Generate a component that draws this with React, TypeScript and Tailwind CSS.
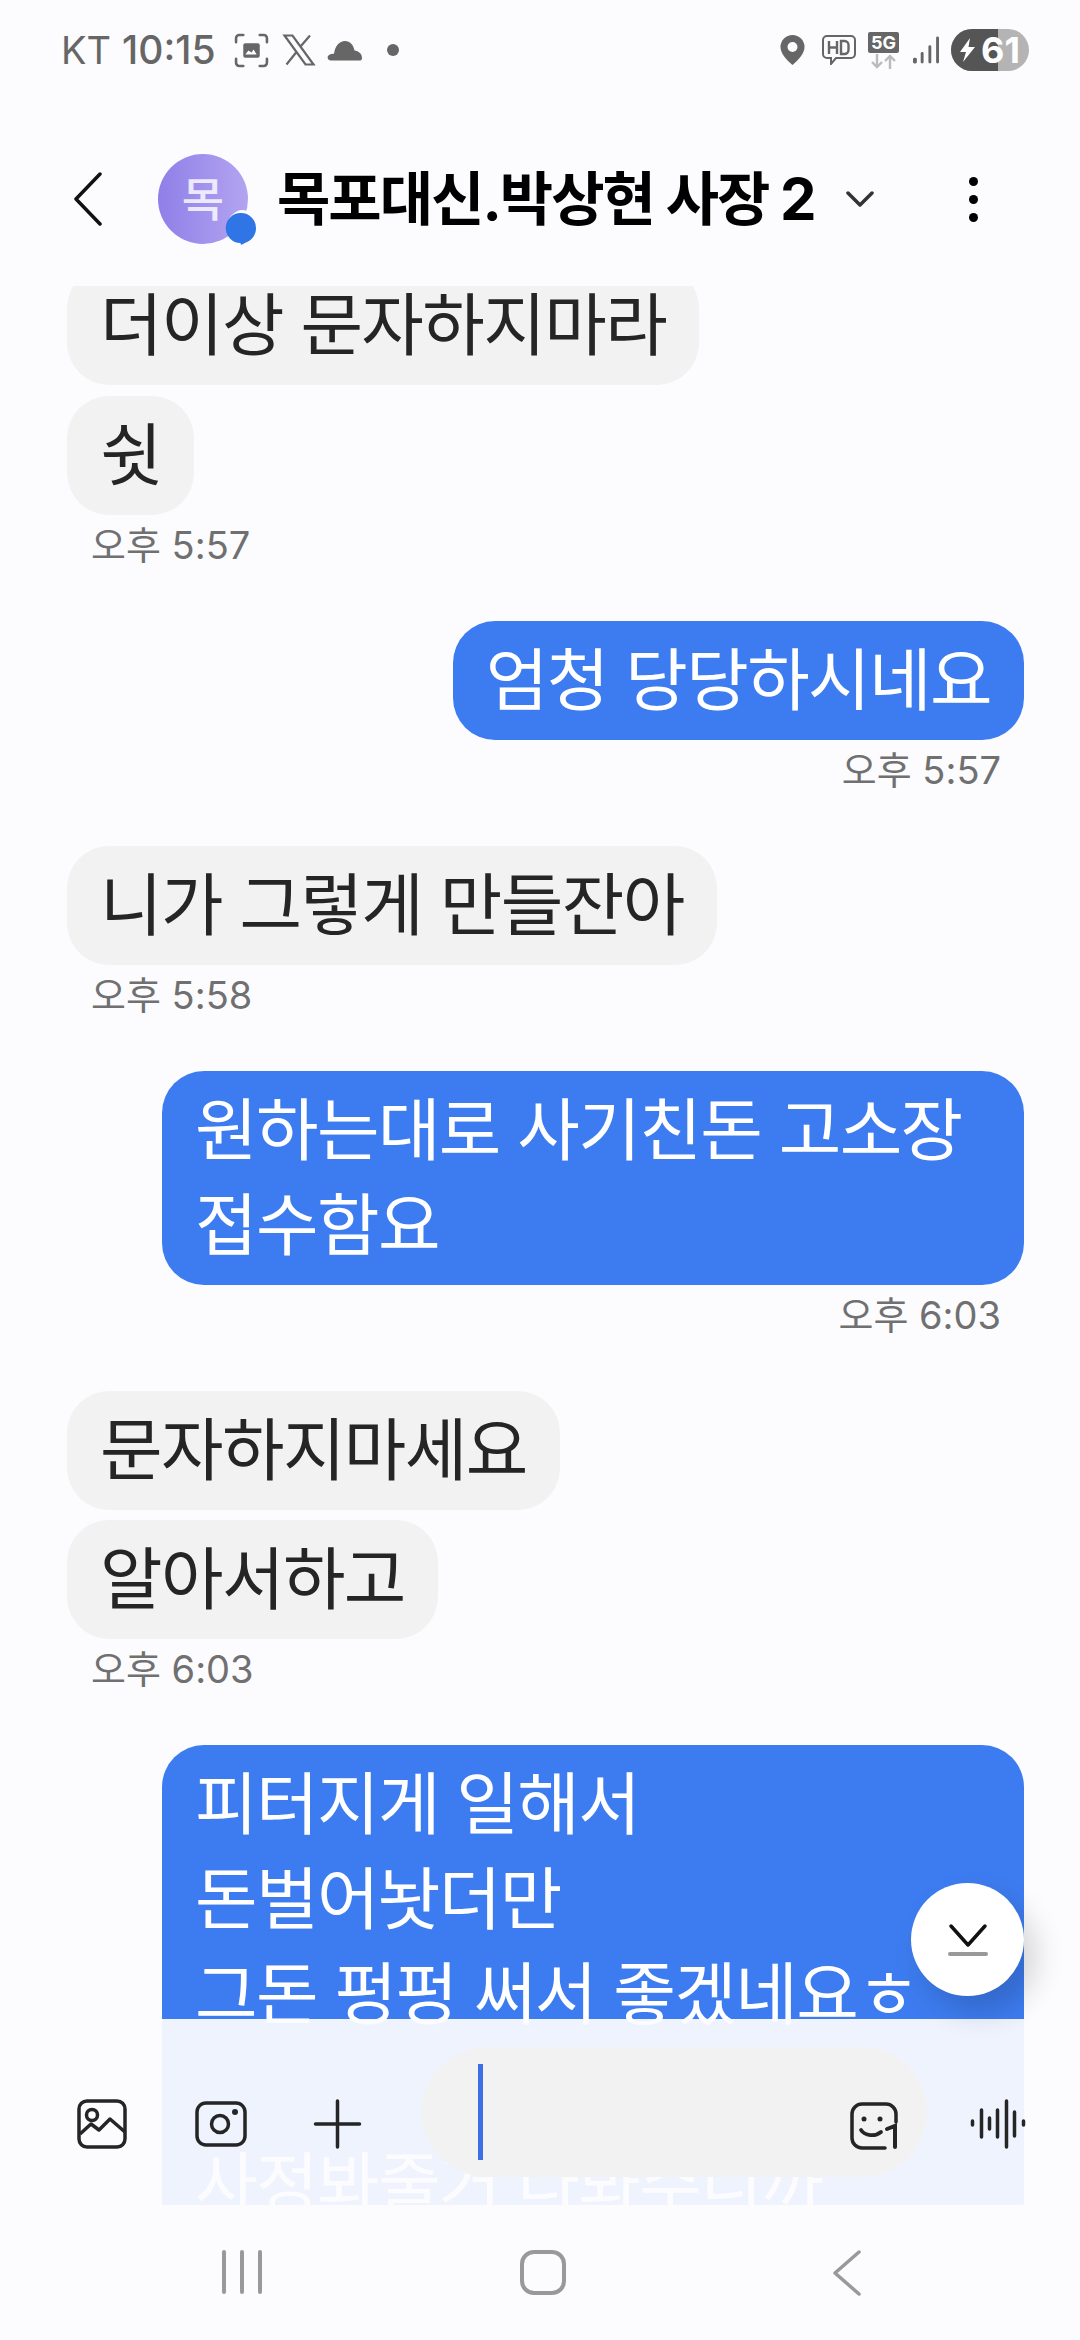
const font = "font-['Inter','Noto_Sans_CJK_KR',sans-serif]";

const Left = ({ text, className = "" }: { text: string; className?: string }) => (
  <div className={`self-start ml-[67px] rounded-[42px] bg-[#f2f2f3] px-[33px] py-[12px] text-[68px] leading-[95px] tracking-[-1.6px] text-[#252525] ${className}`}>
    {text}
  </div>
);

const Right = ({ text, className = "" }: { text: string; className?: string }) => (
  <div className={`self-end mr-[56px] max-w-[862px] rounded-[42px] bg-[#3d7cf0] px-[33px] py-[12px] text-[68px] leading-[95px] tracking-[-1.6px] text-white whitespace-pre-line ${className}`}>
    {text}
  </div>
);

const Time = ({ text, right }: { text: string; right?: boolean }) => (
  <div className={`h-[56px] text-[38px] leading-[60px] text-[#707070] ${right ? "self-end mr-[79px]" : "self-start ml-[91px]"}`}>
    {text}
  </div>
);

const StatusBar = () => (
  <div className="flex h-[100px] items-center justify-between pl-[61px] pr-[51px] text-[#666666]">
    <div className="flex items-center">
      <span className="text-[38px]">KT</span>
      <span className="ml-[11px] text-[39px] font-medium">10:15</span>
      <svg className="ml-[18px]" width="35" height="35" viewBox="0 0 34 34" fill="none" stroke="#666" strokeWidth="2.5" strokeLinecap="round">
        <path d="M2 9V5a3 3 0 0 1 3-3h4M25 2h4a3 3 0 0 1 3 3v4M32 25v4a3 3 0 0 1-3 3h-4M9 32H5a3 3 0 0 1-3-3v-4" />
        <rect x="9" y="10" width="16" height="14" rx="2" fill="#666" stroke="none" />
        <path d="M11 21l3-4 3 2 2-3 3 5z" fill="#fff" stroke="none" />
      </svg>
      <svg className="ml-[13px]" width="34" height="32" viewBox="0 0 32 32" fill="none" stroke="#666" strokeWidth="2.2">
        <path d="M1.500 1.500h8l21 29h-8zM27 1.500 17.500 12.500M13.500 18 3.500 30.500" />
      </svg>
      <svg className="ml-[11px]" width="36" height="21" viewBox="0 0 35 21" fill="#666">
        <path d="M3 20.500a3 3 0 0 1-1-5.800c1-.6 2.600-1 4.500-1C7.500 6 12 1 17.500 1c5 0 8.500 4 9.500 9.500 4 .5 7.500 3 7.500 7.500 0 2-1 2.500-2.500 2.500z" />
      </svg>
      <span className="ml-[24px] h-[12px] w-[12px] rounded-full bg-[#666666]" />
    </div>
    <div className="flex items-center">
      <svg width="25" height="30" viewBox="0 0 24 30">
        <path fillRule="evenodd" fill="#666" d="M12 0a12 12 0 0 1 12 12c0 6.500-6 13-12 18C6 25 0 18.500 0 12A12 12 0 0 1 12 0zm0 7a5 5 0 1 0 0 10 5 5 0 0 0 0-10z" />
      </svg>
      <svg className="ml-[17px]" width="34" height="30" viewBox="0 0 34 30" fill="none" stroke="#666" strokeWidth="2">
        <path d="M5 1h24a4 4 0 0 1 4 4v14a4 4 0 0 1-4 4H14l-5 6v-6H5a4 4 0 0 1-4-4V5a4 4 0 0 1 4-4z" />
        <path d="M7 6v13M15 6v13M7 12.500h8M19 6v13h3.500a4 4 0 0 0 4-4v-5a4 4 0 0 0-4-4z" strokeWidth="2.400" />
      </svg>
      <div className="ml-[12px] relative h-[37px] w-[31px]">
        <div className="h-[21px] rounded-[2px] bg-[#666666] text-center text-[18px] font-bold leading-[21px] text-white">5G</div>
        <svg className="absolute bottom-0 left-[3px]" width="25" height="15" viewBox="0 0 25 15" fill="none" stroke="#bbb" strokeWidth="2.400">
          <path d="M6 0v13M1 8l5 5 5-5M19 15V2M14 7l5-5 5 5" />
        </svg>
      </div>
      <svg className="ml-[14px]" width="26" height="29" viewBox="0 0 27 29" fill="#666">
        <rect x="0" y="22" width="4" height="6" rx="1.500" />
        <rect x="8" y="16" width="3" height="12" rx="1.500" />
        <rect x="16" y="9" width="3" height="19" rx="1.500" />
        <rect x="24" y="0" width="3" height="28" rx="1.500" />
      </svg>
      <div className="ml-[12px] relative flex h-[42px] w-[78px] items-center overflow-hidden rounded-full bg-[#b4b4b4]">
        <div className="absolute left-0 top-0 h-full w-[47px] bg-[#555555]" />
        <svg className="relative ml-[9px]" width="15" height="24" viewBox="0 0 15 24" fill="#fff">
          <path d="M10 0 0 14h6l-3 10 12-15H8.500z" />
        </svg>
        <span className="relative ml-[6px] text-[36px] font-bold leading-none text-white">61</span>
      </div>
    </div>
  </div>
);

const Header = () => (
  <div className="flex h-[186px] items-center pt-[12px]">
    <svg className="ml-[74px]" width="28" height="54" viewBox="0 0 28 54" fill="none" stroke="#111" strokeWidth="3.500" strokeLinecap="round" strokeLinejoin="round">
      <path d="M26 2 2 27l24 25" />
    </svg>
    <div className="relative ml-[56px] flex h-[90px] w-[90px] items-center justify-center rounded-full bg-gradient-to-r from-[#8f7fe8] to-[#b3a4f0] text-[46px] font-medium text-white/80">
      목
      <svg className="absolute -bottom-[5px] -right-[12px]" width="38" height="40" viewBox="0 0 38 40">
        <path d="M19 1a18 18 0 0 1 18 18c0 8-5 14-11 17l-7 3.500-1-3.500A18 18 0 0 1 19 1z" fill="#fcfcff" />
        <path d="M19 4a15 15 0 0 1 15 15c0 7-4 12-10 14.500l-5 2.500-.5-2A15 15 0 0 1 19 4z" fill="#2f75e6" />
      </svg>
    </div>
    <div className="ml-[29px] w-[535px] shrink-0 whitespace-nowrap text-[58px] font-bold leading-none tracking-[-2px] text-black">목포대신.박상현 사장 2</div>
    <svg className="ml-[34px]" width="28" height="16" viewBox="0 0 28 16" fill="none" stroke="#333" strokeWidth="3.500" strokeLinecap="round" strokeLinejoin="round">
      <path d="M2 2l12 12L26 2" />
    </svg>
    <div className="ml-[95px] flex flex-col gap-[9px]">
      <span className="h-[9px] w-[9px] rounded-full bg-black" />
      <span className="h-[9px] w-[9px] rounded-full bg-black" />
      <span className="h-[9px] w-[9px] rounded-full bg-black" />
    </div>
  </div>
);

const InputBar = () => (
  <div className="absolute inset-x-0 bottom-0 flex h-[186px] items-center bg-[#fcfcff]/[0.93]">
    <svg className="ml-[77px] mt-[24px]" width="50" height="50" viewBox="0 0 50 50" fill="none" stroke="#252525" strokeWidth="3.500" strokeLinejoin="round">
      <rect x="2" y="2" width="46" height="46" rx="8" />
      <circle cx="15" cy="16" r="5.500" />
      <path d="M3 35l11-10 8 6 11-11 15 13" />
    </svg>
    <svg className="ml-[68px] mt-[24px]" width="52" height="46" viewBox="0 0 52 46" fill="none" stroke="#252525" strokeWidth="3.500">
      <rect x="2" y="2" width="48" height="42" rx="9" />
      <circle cx="25" cy="23" r="8.500" />
      <circle cx="40" cy="11" r="3" fill="#252525" stroke="none" />
    </svg>
    <svg className="ml-[66px] mt-[24px]" width="49" height="50" viewBox="0 0 48 50" fill="none" stroke="#252525" strokeWidth="3.500" strokeLinecap="round">
      <path d="M24 2v46M2 25h44" />
    </svg>
    <div className="ml-[60px] flex h-[130px] w-[505px] items-center justify-between rounded-full bg-[#f2f2f3] pl-[56px] pr-[29px]">
      <div className="h-[96px] w-[5px] bg-[#3d70e4]" />
      <svg className="mt-[28px]" width="48" height="48" viewBox="0 0 48 48" fill="none" stroke="#252525" strokeWidth="3.500" strokeLinecap="round">
        <path d="M46 20V12a10 10 0 0 0-10-10H12A10 10 0 0 0 2 12v24a10 10 0 0 0 10 10h23" />
        <circle cx="14" cy="17" r="2.500" fill="#252525" stroke="none" />
        <circle cx="30" cy="17" r="2.500" fill="#252525" stroke="none" />
        <path d="M11 28c4 6 14 7 20 2" strokeWidth="3.800" />
        <path d="M37 27l8-3v21" strokeWidth="4" />
      </svg>
    </div>
    <svg className="ml-[43px] mt-[24px]" width="57" height="50" viewBox="0 0 56 50" fill="none" stroke="#252525" strokeWidth="3.500" strokeLinecap="round">
      <path d="M2 22v4M11 11v27M19 19v11M27 11v27M36 2v46M44 13v24M53 22v4" />
    </svg>
  </div>
);

const NavBar = () => (
  <div className="flex h-[135px] items-start bg-[#fcfcff] pt-[45px]">
    <div className="ml-[222px] flex h-[44px] gap-[14px]">
      <span className="w-[4px] rounded-full bg-[#999999]" />
      <span className="w-[4px] rounded-full bg-[#999999]" />
      <span className="w-[4px] rounded-full bg-[#999999]" />
    </div>
    <div className="ml-[258px] h-[45px] w-[46px] rounded-[14px] border-[4px] border-[#999999]" />
    <svg className="ml-[267px]" width="28" height="46" viewBox="0 0 28 46" fill="none" stroke="#999" strokeWidth="3.500" strokeLinecap="round" strokeLinejoin="round">
      <path d="M26 2 2 23l24 21" />
    </svg>
  </div>
);

export default function App() {
  return (
    <div className={`flex h-[2340px] w-[1080px] flex-col overflow-hidden bg-[#fcfcff] ${font}`}>
      <StatusBar />
      <Header />
      <div className="relative flex-1 overflow-hidden">
        <div className="-mt-[20px] flex flex-col">
          <Left text="더이상 문자하지마라" />
          <Left text="쉿" className="mt-[11px]" />
          <Time text="오후 5:57" />
          <Right text="엄청 당당하시네요" className="mt-[50px]" />
          <Time text="오후 5:57" right />
          <Left text="니가 그렇게 만들잔아" className="mt-[50px]" />
          <Time text="오후 5:58" />
          <Right text="원하는대로 사기친돈 고소장 접수함요" className="mt-[50px]" />
          <Time text="오후 6:03" right />
          <Left text="문자하지마세요" className="mt-[50px]" />
          <Left text="알아서하고" className="mt-[10px]" />
          <Time text="오후 6:03" />
          <Right text={"피터지게 일해서\n돈벌어놧더만\n그돈 펑펑 써서 좋겠네요ㅎ\n\n사정봐줄거 다봐주니까"} className="mt-[50px] w-[862px]" />
        </div>
        <InputBar />
        <button className="absolute right-[56px] top-[1597px] flex h-[113px] w-[113px] items-center justify-center rounded-full bg-white shadow-[12px_16px_30px_rgba(0,0,0,0.16)]">
          <svg width="40" height="34" viewBox="0 0 40 34" fill="none" strokeLinecap="round">
            <path d="M3 3l17 19L37 3" stroke="#111" strokeWidth="3.500" strokeLinejoin="round" />
            <path d="M2 31h36" stroke="#999" strokeWidth="4" />
          </svg>
        </button>
      </div>
      <NavBar />
    </div>
  );
}
